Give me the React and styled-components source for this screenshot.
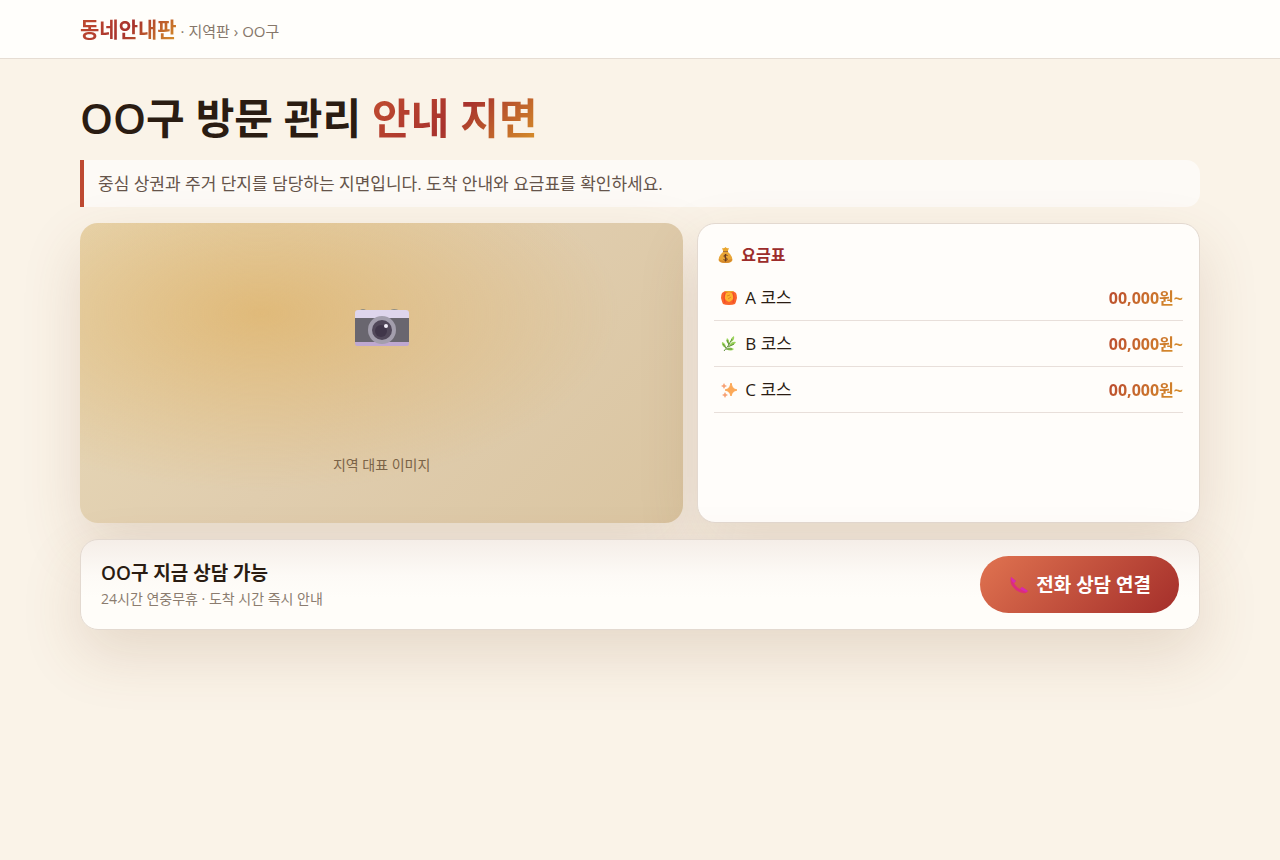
import React from "react";
import styled, { createGlobalStyle } from "styled-components";

const Global = createGlobalStyle`
  *, *::before, *::after { box-sizing: border-box; }
  body {
    margin: 0;
    min-height: 100vh;
    background: #faf3e8;
    color: #2a1c12;
    font-family: "Open Sans", "Noto Sans CJK KR", sans-serif;
    font-size: 17px;
    line-height: 24px;
  }
  h1, h2, p, ul { margin: 0; padding: 0; }
`;

const Inner = styled.div`
  width: 100%;
  max-width: 1168px;
  margin: 0 auto;
  padding: 0 24px;
`;

const Header = styled.header`
  background: #fffefb;
  border-bottom: 1px solid #e6ddd3;
  padding: 14px 0 12px;
`;

const Nav = styled.nav`
  display: flex;
  align-items: baseline;
  gap: 4px;
  line-height: 30px;
`;

const GradientText = styled.span`
  background: linear-gradient(135deg, #c24e31 0%, #a8322d 50%, #d9952a 100%);
  background-clip: text;
  -webkit-background-clip: text;
  color: transparent;
`;

const Brand = styled.a`
  text-decoration: none;
  font-size: 21px;
  font-weight: 700;
`;

const Crumb = styled.span`
  font-size: 15px;
  color: #86776a;
`;

const Main = styled.main`
  padding: 32px 0;
`;

const Title = styled.h1`
  font-size: 42px;
  font-weight: 600;
  line-height: 54px;
  margin-bottom: 15px;
`;

const Lead = styled.p`
  border-left: 4px solid #be4a32;
  border-radius: 0 14px 14px 0;
  background: #fdfaf6;
  padding: 12px 14px 11px;
  color: #65544a;
  margin-bottom: 16px;
`;

const Columns = styled.div`
  display: grid;
  grid-template-columns: 6fr 5fr;
  gap: 14px;
  margin-bottom: 16px;
  @media (max-width: 760px) { grid-template-columns: 1fr; }
`;

const shadow = "0 24px 60px rgba(122, 72, 36, 0.16)";

const Photo = styled.figure`
  margin: 0;
  min-height: 300px;
  border-radius: 18px;
  display: flex;
  flex-direction: column;
  align-items: center;
  justify-content: flex-end;
  gap: 105px;
  padding-bottom: 46px;
  background:
    radial-gradient(ellipse at 30% 30%, rgba(222, 170, 84, 0.6), transparent 60%),
    linear-gradient(135deg, #e8d9b8, #e0cdae 50%, #dac5a1);
  box-shadow: ${shadow};
`;

const Caption = styled.figcaption`
  font-size: 14px;
  color: #7a6347;
`;

const Card = styled.section`
  background: #fffdfa;
  border: 1px solid #e3d9d0;
  border-radius: 18px;
  box-shadow: ${shadow};
`;

const PriceCard = styled(Card)`
  padding: 16px;
`;

const PriceTitle = styled.h2`
  display: flex;
  align-items: center;
  gap: 8px;
  padding: 3px 4px;
  margin-bottom: 5px;
  font-size: 16px;
  font-weight: 600;
  color: #9c2c2b;
`;

const PriceTable = styled.table`
  width: 100%;
  border-collapse: collapse;
  th, td {
    padding: 11px 0 10px;
    border-bottom: 1px solid #e8dfda;
  }
  th { text-align: left; font-weight: 400; padding-left: 7px; }
  td { text-align: right; font-size: 16px; font-weight: 700; }
`;

const Course = styled.span`
  display: flex;
  align-items: center;
  gap: 8px;
`;

const Price = styled.span`
  background: linear-gradient(135deg, #b9472f, #d9952a);
  background-clip: text;
  -webkit-background-clip: text;
  color: transparent;
`;

const CallCard = styled(Card)`
  position: relative;
  display: flex;
  flex-wrap: wrap;
  align-items: center;
  justify-content: space-between;
  gap: 16px;
  padding: 16px 20px;
  background: linear-gradient(#f5eee8, #fdfaf6 40%, #fffdf9 65%);
`;

const CallTitle = styled.h2`
  font-size: 19px;
  font-weight: 600;
  line-height: 28px;
`;

const CallNote = styled.p`
  font-size: 14px;
  color: #8b7c6f;
`;

const CallButton = styled.button`
  display: flex;
  align-items: center;
  gap: 8px;
  border: 0;
  border-radius: 999px;
  padding: 17px 28px 16px 30px;
  background: linear-gradient(135deg, #e07350, #a42e2a);
  color: #fff;
  font: inherit;
  font-size: 19px;
  font-weight: 600;
  cursor: pointer;
`;

const Camera = () => (
  <svg width="54" height="40" viewBox="0 0 54 40" aria-hidden="true">
    <path d="M5 3Q5 1 8 1Q11 1 11 3ZM35 3Q36 1 39 1Q43 1 44 3Z" fill="#8d8d85" />
    <path d="M3 2H51Q54 2 54 5V11H0V5Q0 2 3 2Z" fill="#ded5ec" />
    <rect y="10" width="54" height="25" fill="#69666f" />
    <path d="M0 34H54V35Q54 38 52 38H2Q0 38 0 35Z" fill="#bfa8d0" />
    <circle cx="27" cy="22" r="14" fill="#a39ead" />
    <circle cx="27" cy="22" r="10" fill="#51485a" />
    <circle cx="26" cy="23" r="6" fill="#40364a" />
    <circle cx="31" cy="18" r="2" fill="#f4effa" />
  </svg>
);

const MoneyBag = () => (
  <svg width="15" height="16" viewBox="0 0 15 16" aria-hidden="true">
    <path d="M4 1Q6 2 7.500 0Q9 2 11 1L9.500 5H5.500Z" fill="#e9a52c" />
    <path d="M5 5H10Q14.500 9 14.500 13Q14 16 7.500 16Q1 16 .5 13Q.5 9 5 5Z" fill="#e9a637" />
    <path d="M1 12Q4 15 14 12Q14 16 7.500 16Q1 16 1 12Z" fill="#d5892b" />
    <path d="M5 4.500H10" stroke="#a8713a" strokeWidth="1" />
    <path d="M9.500 8.500Q7.500 7 6 8.500Q5.500 10 7.500 10.500Q10 11.500 9 13Q7.500 14 5.500 12.500M7.500 7V14.500" fill="none" stroke="#6b3c20" strokeWidth="1" />
  </svg>
);

const Lantern = () => (
  <svg width="16" height="16" viewBox="0 0 16 16" aria-hidden="true">
    <path d="M4 1H12L15 3Q16 5 16 8Q15 12 14 14Q12 15 8 15Q4 15 2 14Q1 12 0 8Q0 5 1 3Z" fill="#fa642c" />
    <path d="M4 3Q2 7 4 13M12 3Q14 7 12 13" fill="none" stroke="#f04a28" strokeWidth="1" />
    <path d="M8 2L11 3L12 6L12 9L10 11L8 12L6 11L4 9L4 6L5 3Z" fill="#ffb22e" />
    <path d="M4 1H12V2H4Z" fill="#e6a929" />
    <path d="M6 6L9 5M7 9L10 7" stroke="#df8a22" strokeWidth="1" />
  </svg>
);

const Herb = () => (
  <svg width="16" height="16" viewBox="0 0 16 16" aria-hidden="true">
    <path d="M5 12Q0 10 1 6Q5 7 5 12ZM8 8Q4 6 6 2Q9 4 8 8ZM10 6Q9 2 13 0Q14 4 10 6ZM8 10Q10 5 15 6Q13 10 8 10ZM5 13Q9 10 13 13Q10 16 5 13Z" fill="#9bd45c" />
    <path d="M3 15Q7 11 11 3M5 12L2 8M8 9L6 4M7 11L13 8M5 13L11 13" stroke="#62903d" strokeWidth="1" fill="none" />
  </svg>
);

const Sparkles = () => (
  <svg width="16" height="16" viewBox="0 0 16 16" aria-hidden="true">
    <path d="M10 1Q11 5 12 6Q13 7 16 8Q13 9 12 10Q11 11 10 14Q9 11 8 10Q7 9 4 8Q7 7 8 6Q9 5 10 1Z" fill="#fca958" stroke="#fca958" strokeWidth="1" strokeLinejoin="round" />
    <path d="M3 1L4 3L6 4L4 5L3 7L2 5L0 4L2 3ZM4 10L5 12L7 13L5 14L4 16L3 14L1 13L3 12Z" fill="#f7a276" />
  </svg>
);

const Phone = () => (
  <svg width="18" height="18" viewBox="0 0 18 18" aria-hidden="true">
    <path d="M1 1L6 5L4 7Q6 11 10 13L12 11L18 15Q16 18 13 17Q8 17 3 11Q-1 6 1 1Z" fill="#dc2c7c" />
    <path d="M1 1L6 5L4 7Q1 5 1 1ZM10 13L12 11L18 15L16 16Z" fill="#d62bae" />
  </svg>
);

const courses = [
  { name: "A 코스", Icon: Lantern },
  { name: "B 코스", Icon: Herb },
  { name: "C 코스", Icon: Sparkles },
];

export default function App() {
  return (
    <>
      <Global />
      <Header>
        <Inner>
          <Nav>
            <Brand href="#"><GradientText>동네안내판</GradientText></Brand>
            <Crumb>· 지역판 › OO구</Crumb>
          </Nav>
        </Inner>
      </Header>
      <Main>
        <Inner>
          <Title>OO구 방문 관리 <GradientText>안내 지면</GradientText></Title>
          <Lead>중심 상권과 주거 단지를 담당하는 지면입니다. 도착 안내와 요금표를 확인하세요.</Lead>
          <Columns>
            <Photo>
              <Camera />
              <Caption>지역 대표 이미지</Caption>
            </Photo>
            <PriceCard>
              <PriceTitle><MoneyBag />요금표</PriceTitle>
              <PriceTable>
                <tbody>
                  {courses.map(({ name, Icon }) => (
                    <tr key={name}>
                      <th scope="row"><Course><Icon />{name}</Course></th>
                      <td><Price>00,000원~</Price></td>
                    </tr>
                  ))}
                </tbody>
              </PriceTable>
            </PriceCard>
          </Columns>
          <CallCard>
            <div>
              <CallTitle>OO구 지금 상담 가능</CallTitle>
              <CallNote>24시간 연중무휴 · 도착 시간 즉시 안내</CallNote>
            </div>
            <CallButton type="button"><Phone />전화 상담 연결</CallButton>
          </CallCard>
        </Inner>
      </Main>
    </>
  );
}
